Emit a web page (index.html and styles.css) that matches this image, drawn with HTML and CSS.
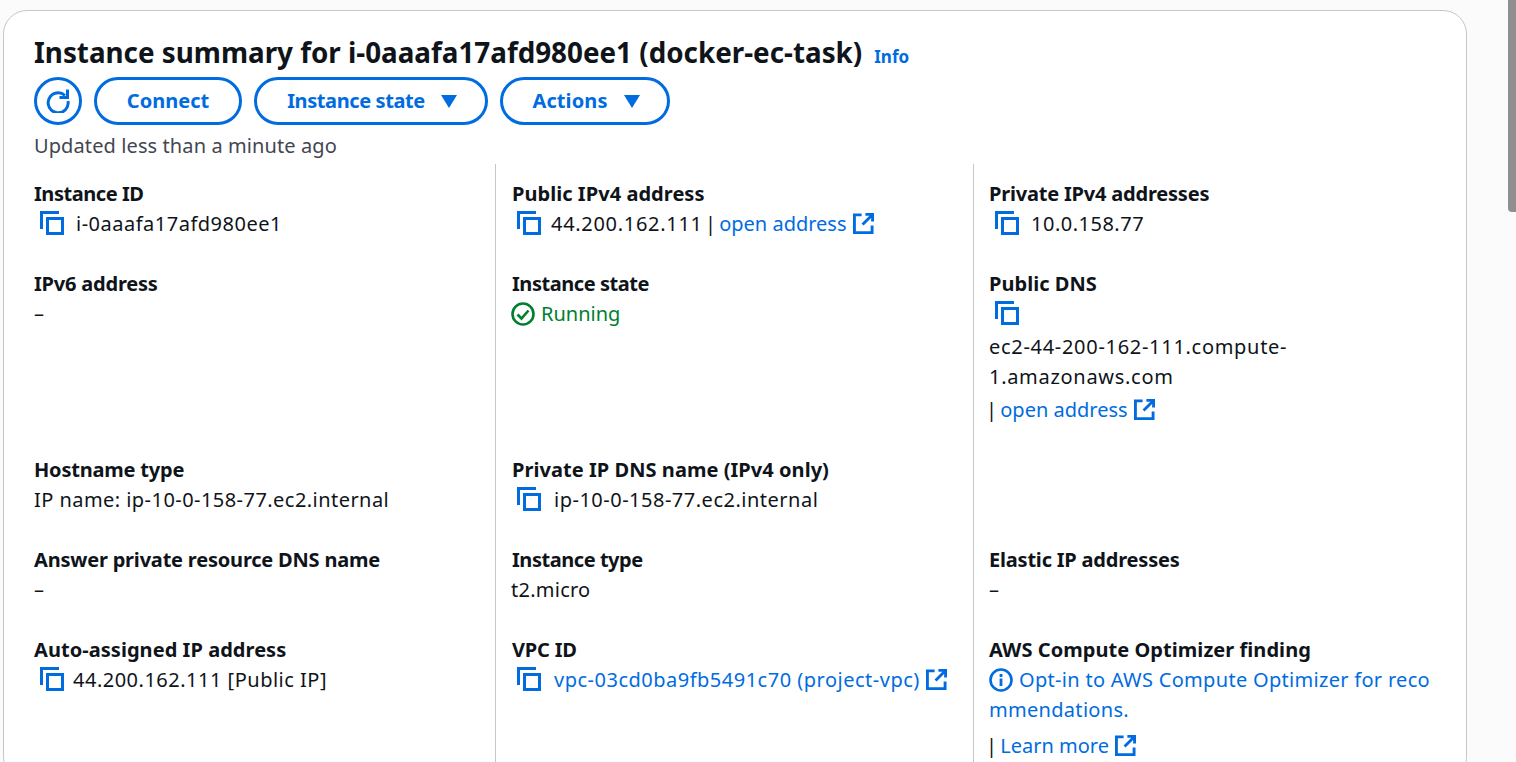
FILE: index.html
```html
<!DOCTYPE html>
<html lang="en">
<head>
    <meta charset="UTF-8">
    <meta name="viewport" content="width=device-width, initial-scale=1.0">
    <title>Instance summary</title>
    <link rel="stylesheet" href="styles.css">
</head>
<body>
    <svg class="icon-defs" width="0" height="0" aria-hidden="true">
        <symbol id="copy" viewBox="0 0 24 24">
            <path d="M1.5 18V1.5H19" fill="none" stroke="currentColor" stroke-width="3"/>
            <rect x="7.5" y="7.5" width="15" height="15" fill="none" stroke="currentColor" stroke-width="3"/>
        </symbol>
        <symbol id="external" viewBox="0 0 22 22">
            <path d="M9 2H1.5V20.5H20V13" fill="none" stroke="currentColor" stroke-width="3"/>
            <path d="M13 1.5H20.5V9M20 2L10 12" fill="none" stroke="currentColor" stroke-width="3"/>
        </symbol>
    </svg>

    <div class="scroll-thumb"></div>

    <div class="card">
        <div class="title-row">
            <h1>Instance summary for i-0aaafa17afd980ee1 (docker-ec-task)</h1>
            <a href="#" class="info-link">Info</a>
        </div>

        <div class="actions">
            <button class="btn btn-icon" aria-label="Refresh">
                <svg width="24" height="24" viewBox="0 0 24 24">
                    <path d="M19 6.5A10 10 0 1 0 22 12" fill="none" stroke="currentColor" stroke-width="3"/>
                    <path d="M21.5 0.5V8.5H13.5" fill="none" stroke="currentColor" stroke-width="3"/>
                </svg>
            </button>
            <button class="btn btn-connect">Connect</button>
            <button class="btn btn-state">Instance state <span class="caret"></span></button>
            <button class="btn btn-actions">Actions <span class="caret"></span></button>
        </div>
        <p class="updated">Updated less than a minute ago</p>

        <div class="details">
            <div class="cell">
                <div class="label label-tight">Instance ID</div>
                <div class="value"><svg class="copy gap-md"><use href="#copy"/></svg><span class="num">i-0aaafa17afd980ee1</span></div>
            </div>
            <div class="cell">
                <div class="label label-loose">Public IPv4 address</div>
                <div class="value"><svg class="copy"><use href="#copy"/></svg><span class="num-wide">44.200.162.111</span> <span class="sep">|</span> <a href="#">open address<svg class="ext"><use href="#external"/></svg></a></div>
            </div>
            <div class="cell">
                <div class="label">Private IPv4 addresses</div>
                <div class="value"><svg class="copy gap-md"><use href="#copy"/></svg><span class="num">10.0.158.77</span></div>
            </div>

            <div class="cell">
                <div class="label">IPv6 address</div>
                <div class="value">–</div>
            </div>
            <div class="cell">
                <div class="label label-tight">Instance state</div>
                <div class="value running">
                    <svg class="status" viewBox="0 0 24 24">
                        <circle cx="12" cy="12" r="10.5" fill="none" stroke="currentColor" stroke-width="2.6"/>
                        <path d="M6.5 12.5L10.5 16.5L17.5 8.5" fill="none" stroke="currentColor" stroke-width="2.6"/>
                    </svg>Running
                </div>
            </div>
            <div class="cell">
                <div class="label label-loose">Public DNS</div>
                <div class="value copy-row"><svg class="copy"><use href="#copy"/></svg></div>
                <div class="value num-wide">ec2-44-200-162-111.compute-<br>1.amazonaws.com</div>
                <div class="value link-row"><span class="sep">|</span> <a href="#">open address<svg class="ext"><use href="#external"/></svg></a></div>
            </div>

            <div class="cell">
                <div class="label">Hostname type</div>
                <div class="value num-host">IP name: ip-10-0-158-77.ec2.internal</div>
            </div>
            <div class="cell">
                <div class="label label-loose">Private IP DNS name (IPv4 only)</div>
                <div class="value"><svg class="copy gap-lg"><use href="#copy"/></svg><span class="num">ip-10-0-158-77.ec2.internal</span></div>
            </div>
            <div class="cell"></div>

            <div class="cell">
                <div class="label">Answer private resource DNS name</div>
                <div class="value">–</div>
            </div>
            <div class="cell">
                <div class="label label-tight">Instance type</div>
                <div class="value num-slight">t2.micro</div>
            </div>
            <div class="cell">
                <div class="label">Elastic IP addresses</div>
                <div class="value">–</div>
            </div>

            <div class="cell">
                <div class="label label-loose">Auto-assigned IP address</div>
                <div class="value"><svg class="copy gap-sm"><use href="#copy"/></svg><span class="num">44.200.162.111 [Public IP]</span></div>
            </div>
            <div class="cell">
                <div class="label">VPC ID</div>
                <div class="value"><svg class="copy gap-lg"><use href="#copy"/></svg><a href="#" class="num">vpc-03cd0ba9fb5491c70 (project-vpc)<svg class="ext"><use href="#external"/></svg></a></div>
            </div>
            <div class="cell">
                <div class="label label-loose">AWS Compute Optimizer finding</div>
                <div class="value optimizer">
                    <a href="#"><svg class="status" viewBox="0 0 24 24">
                        <circle cx="12" cy="12" r="10.5" fill="none" stroke="currentColor" stroke-width="2.6"/>
                        <path d="M12 10.5V18M12 6V9" fill="none" stroke="currentColor" stroke-width="2.8"/>
                    </svg>Opt-in to AWS Compute Optimizer for recommendations.</a>
                </div>
                <div class="value learn-row"><span class="sep">|</span> <a href="#">Learn more<svg class="ext"><use href="#external"/></svg></a></div>
            </div>
        </div>
    </div>
</body>
</html>
```

FILE: styles.css
```css
html, body {
    height: 100%;
    overflow: hidden;
}

body {
    font-family: 'Noto Sans', sans-serif;
    font-size: 20px;
    line-height: 30px;
    background-color: #fbfbfb;
    color: #0f141a;
    margin: 0;
    padding: 0;
}

a {
    color: #006ce0;
    text-decoration: none;
}

.icon-defs {
    position: absolute;
}

.scroll-thumb {
    position: absolute;
    top: 0;
    right: 0;
    width: 8px;
    height: 212px;
    background-color: #8f8f8f;
    border-bottom-left-radius: 4px;
}

.card {
    width: 1464px;
    box-sizing: border-box;
    margin: 10px 0 0 3px;
    padding: 23px 30px 0;
    background-color: #fff;
    border: 1px solid #c6c6cd;
    border-radius: 24px;
}

.title-row {
    display: flex;
    align-items: baseline;
    gap: 12px;
}

h1 {
    margin: 0;
    font-size: 27.8px;
    line-height: 36px;
    font-weight: 700;
}

.info-link {
    font-size: 17px;
    font-weight: 700;
}

.actions {
    display: flex;
    gap: 12px;
    margin-top: 5px;
}

.btn {
    display: flex;
    align-items: center;
    justify-content: center;
    height: 48px;
    box-sizing: border-box;
    padding: 0;
    background-color: #fff;
    border: 3px solid #006ce0;
    border-radius: 24px;
    color: #006ce0;
    font-family: inherit;
    font-size: 20px;
    line-height: 26px;
    font-weight: 700;
}

.btn-icon {
    width: 48px;
}

.btn-connect {
    width: 148px;
}

.btn-state {
    width: 234px;
    padding-left: 2px;
    letter-spacing: -0.4px;
}

.btn-actions {
    width: 170px;
    padding-left: 2px;
    letter-spacing: 0.1px;
}

.caret {
    width: 0;
    height: 0;
    margin-left: 16px;
    border-left: 8px solid transparent;
    border-right: 8px solid transparent;
    border-top: 13px solid #006ce0;
}

.updated {
    margin: 6px 0 3px;
    color: #424650;
    letter-spacing: 0.1px;
}

.details {
    display: grid;
    grid-template-columns: 462px 478px 1fr;
    grid-template-rows: 90px 186px 90px 90px 160px;
}

.cell {
    padding: 15px 0 0 15px;
    border-right: 1px solid #c6c6cd;
    min-width: 0;
}

.cell:nth-child(3n+1) {
    padding-left: 0;
}

.cell:nth-child(3n) {
    border-right: none;
}

.cell:nth-child(3n+2) .label {
    margin-left: 1px;
}

.label {
    font-weight: 700;
    letter-spacing: -0.2px;
}

.label-tight {
    letter-spacing: -0.45px;
}

.label-loose {
    letter-spacing: 0.05px;
}

.num {
    letter-spacing: 0.5px;
}

.num-wide {
    letter-spacing: 0.7px;
}

.num-host {
    letter-spacing: 0.45px;
}

.num-slight {
    letter-spacing: 0.25px;
}

.sep {
    margin: 0 -2px 0 -3px;
}

.copy-row {
    margin-bottom: 3px;
}

.link-row {
    margin-top: 3px;
}

.learn-row {
    margin-top: 6px;
}

.copy {
    width: 24px;
    height: 24px;
    margin: 0 10px 0 6px;
    vertical-align: -4px;
    color: #006ce0;
}

.gap-sm {
    margin-right: 9px;
}

.gap-md {
    margin-right: 12px;
}

.gap-lg {
    margin-right: 13px;
}

.ext {
    width: 21px;
    height: 21px;
    margin-left: 6px;
    vertical-align: -3px;
    color: #006ce0;
}

.status {
    width: 24px;
    height: 24px;
    margin-right: 6px;
    vertical-align: -5px;
}

.running {
    color: #00802f;
}

.optimizer {
    word-break: break-all;
    letter-spacing: 0.3px;
}
```
